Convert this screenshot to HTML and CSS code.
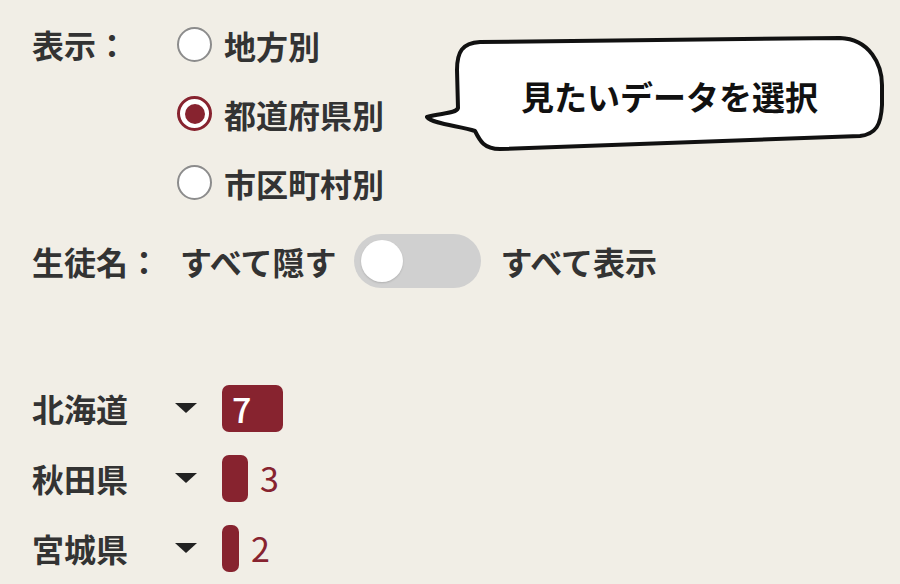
FILE: index.html
```html
<!DOCTYPE html>
<html lang="ja">
<head>
<meta charset="utf-8">
<link rel="stylesheet" href="styles.css">
</head>
<body>
<div class="page">
  <div class="display-row">
    <div class="label">表示：</div>
    <div class="radios">
      <div class="radio-item"><span class="radio"></span><span class="radio-text">地方別</span></div>
      <div class="radio-item"><span class="radio checked"><span class="dot"></span></span><span class="radio-text">都道府県別</span></div>
      <div class="radio-item"><span class="radio"></span><span class="radio-text">市区町村別</span></div>
    </div>
  </div>
  <div class="toggle-row">
    <div class="label">生徒名：</div>
    <span class="toggle-text">すべて隠す</span>
    <span class="toggle"><span class="knob"></span></span>
    <span class="toggle-text">すべて表示</span>
  </div>
  <div class="list">
    <div class="list-row">
      <div class="pref">北海道</div>
      <span class="caret"></span>
      <span class="bar inside" style="width:61px">7</span>
    </div>
    <div class="list-row">
      <div class="pref">秋田県</div>
      <span class="caret"></span>
      <span class="bar" style="width:26px"></span>
      <span class="count">3</span>
    </div>
    <div class="list-row">
      <div class="pref">宮城県</div>
      <span class="caret"></span>
      <span class="bar" style="width:17px"></span>
      <span class="count">2</span>
    </div>
  </div>
  <div class="bubble">
    <svg class="bubble-shape" width="480" height="140" viewBox="0 0 480 140">
      <path d="M37 40 C37 22 42 13 60 12 L420 8 C450 9 462 35 462 55 L462 75 C461 95 456 104 440 106 L80 119 C64 119 60 111 55 101 C40 96 12 94 7 87 C20 83 36 84 38 78 Z" fill="#fff" stroke="#111" stroke-width="4" stroke-linejoin="round"/>
    </svg>
    <span class="bubble-text">見たいデータを選択</span>
  </div>
</div>
</body>
</html>
```
FILE: styles.css
```css
html, body {
  margin: 0;
  padding: 0;
  background: #f1eee6;
}
.page {
  position: relative;
  width: 900px;
  height: 584px;
  overflow: hidden;
  padding-left: 32px;
  box-sizing: border-box;
  font-family: "Noto Sans CJK JP", "Noto Sans", sans-serif;
  color: #333;
}
.display-row {
  display: flex;
  padding-top: 10px;
}
.label {
  width: 145px;
  flex-shrink: 0;
  font-size: 32px;
  font-weight: 700;
  line-height: 69px;
}
.radios {
  display: flex;
  flex-direction: column;
}
.radio-item {
  display: flex;
  align-items: center;
  height: 69px;
}
.radio {
  width: 35px;
  height: 35px;
  box-sizing: border-box;
  border-radius: 50%;
  border: 2px solid #8c8c8c;
  background: #fff;
  display: flex;
  align-items: center;
  justify-content: center;
  margin-right: 12px;
}
.radio.checked {
  border: 3px solid #87232f;
}
.dot {
  width: 20px;
  height: 20px;
  border-radius: 50%;
  background: #87232f;
}
.radio-text {
  font-size: 32px;
  font-weight: 700;
  line-height: 1;
}
.toggle-row {
  display: flex;
  align-items: center;
  height: 54px;
  margin-top: 17px;
}
.toggle-row .label {
  width: 148px;
  line-height: 54px;
}
.toggle-text {
  font-size: 32px;
  font-weight: 700;
  line-height: 1;
}
.toggle {
  width: 127px;
  height: 54px;
  border-radius: 27px;
  background: #d0d0d0;
  display: flex;
  align-items: center;
  padding-left: 7px;
  box-sizing: border-box;
  margin: 0 19px 0 18px;
}
.knob {
  width: 42px;
  height: 42px;
  border-radius: 50%;
  background: #fff;
  box-shadow: 0 1px 2px rgba(0,0,0,0.15);
}
.list {
  margin-top: 85px;
  display: flex;
  flex-direction: column;
}
.list-row {
  display: flex;
  align-items: center;
  height: 70px;
}
.pref {
  width: 143px;
  font-size: 32px;
  font-weight: 700;
  line-height: 1;
}
.caret {
  width: 0;
  height: 0;
  border-left: 11px solid transparent;
  border-right: 11px solid transparent;
  border-top: 10px solid #222;
  margin-right: 25px;
}
.bar {
  height: 47px;
  border-radius: 7px;
  background: #87232f;
  box-sizing: border-box;
}
.bar.inside {
  color: #fff;
  font-size: 34px;
  font-weight: 500;
  line-height: 47px;
  padding-left: 10px;
}
.count {
  margin-left: 12px;
  color: #87232f;
  font-size: 34px;
  line-height: 1;
}
.bubble {
  position: absolute;
  left: 420px;
  top: 30px;
  width: 480px;
  height: 140px;
}
.bubble-shape {
  position: absolute;
  left: 0;
  top: 0;
}
.bubble-text {
  position: absolute;
  left: 37px;
  width: 425px;
  text-align: center;
  top: 46px;
  font-size: 33px;
  font-weight: 700;
  color: #111;
  line-height: 40px;
}
```
